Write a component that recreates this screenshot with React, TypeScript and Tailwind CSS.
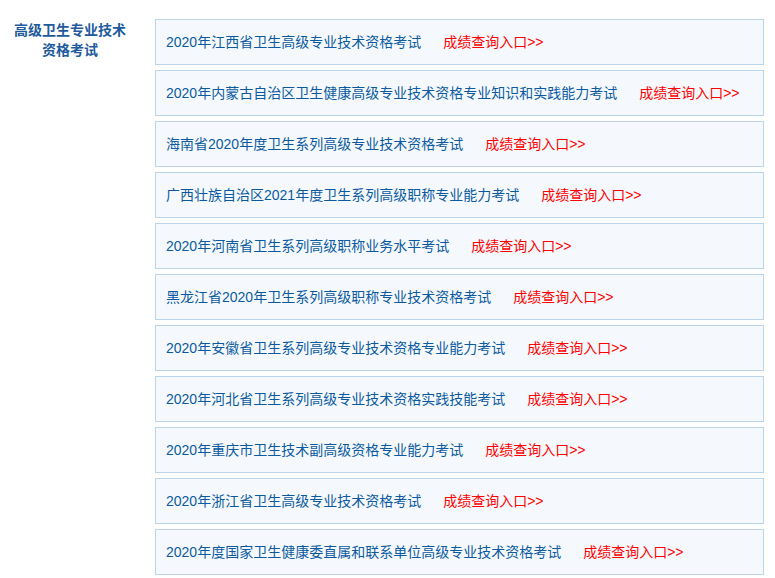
type Exam = { title: string }

const exams: Exam[] = [
  { title: '2020年江西省卫生高级专业技术资格考试' },
  { title: '2020年内蒙古自治区卫生健康高级专业技术资格专业知识和实践能力考试' },
  { title: '海南省2020年度卫生系列高级专业技术资格考试' },
  { title: '广西壮族自治区2021年度卫生系列高级职称专业能力考试' },
  { title: '2020年河南省卫生系列高级职称业务水平考试' },
  { title: '黑龙江省2020年卫生系列高级职称专业技术资格考试' },
  { title: '2020年安徽省卫生系列高级专业技术资格专业能力考试' },
  { title: '2020年河北省卫生系列高级专业技术资格实践技能考试' },
  { title: '2020年重庆市卫生技术副高级资格专业能力考试' },
  { title: '2020年浙江省卫生高级专业技术资格考试' },
  { title: '2020年度国家卫生健康委直属和联系单位高级专业技术资格考试' },
]

export default function App() {
  return (
    <div
      className="flex min-h-screen bg-white pt-[19px] pr-[11px]"
      style={{ fontFamily: '"Liberation Sans", "Noto Sans CJK SC", sans-serif' }}
    >
      {/* Sidebar category */}
      <div className="w-[155px] shrink-0 pr-[15px]">
        <h2 className="text-center text-[14px] leading-[20px] font-bold text-[#1f5b9c] pt-[1px]">
          高级卫生专业技术
          <br />
          资格考试
        </h2>
      </div>

      {/* Exam list */}
      <ul className="flex-1 flex flex-col gap-[5px]">
        {exams.map((exam) => (
          <li
            key={exam.title}
            className="h-[46px] flex items-center border border-[#bcd5ea] bg-[#f5f9fd] pl-[10px] text-[14px]"
          >
            <a href="#" className="text-[#0b5aa0]">
              {exam.title}
            </a>
            <a href="#" className="ml-[22px] text-[#ff0000]">
              成绩查询入口&gt;&gt;
            </a>
          </li>
        ))}
      </ul>
    </div>
  )
}
